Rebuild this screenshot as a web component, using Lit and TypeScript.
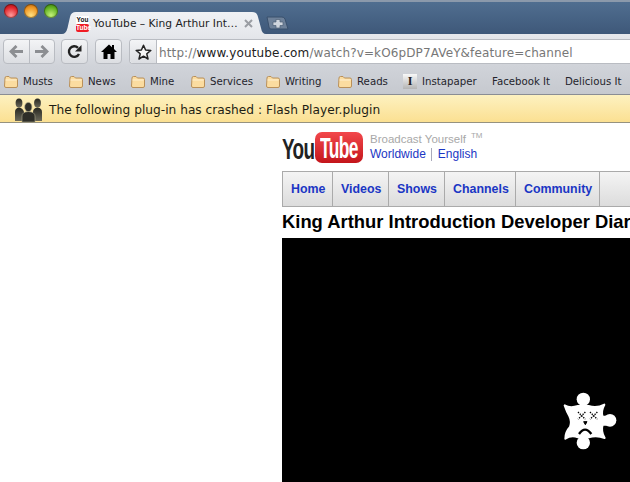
import { LitElement, html, css, svg } from "lit";
import { customElement } from "lit/decorators.js";

const folder = svg`<svg class="ficon" width="14" height="13" viewBox="0 0 14 13"><path d="M1 3 Q1 1.5 2.5 1.5 L5 1.5 L6.5 3 L12 3 Q13.5 3 13.5 4.5 L13.5 11 Q13.5 12.5 12 12.5 L2 12.5 Q.5 12.5 .5 11 Z" fill="#fbdca0" stroke="#b9905a"/><path d="M1.5 5 H12.5" stroke="#fff0d0"/></svg>`;

const marks: [string, number][] = [
  ["Musts", 65],
  ["News", 62],
  ["Mine", 60],
  ["Services", 75],
  ["Writing", 72],
  ["Reads", 65],
];

@customElement("app-root")
export class AppRoot extends LitElement {
  static styles = css`
    :host { display: block; width: 630px; height: 482px; overflow: hidden; background: #fff; font-family: "DejaVu Sans", sans-serif; color: #222; }
    .title { height: 34px; box-sizing: border-box; border-top: 2px solid #8b99ab; background: linear-gradient(#506e90, #3e5879); display: flex; align-items: flex-end; padding-left: 4px; }
    .lights { display: flex; gap: 6.5px; align-self: flex-start; margin-top: 2px; width: 54px; }
    .light { width: 14px; height: 14px; border-radius: 50%; box-shadow: inset 0 0 0 1px rgba(0,0,0,.35); }
    .red { background: radial-gradient(circle at 50% 80%, #ff9a9a, #e0242a 60%, #8c1015); }
    .amber { background: radial-gradient(circle at 50% 80%, #ffe080, #ee9420 60%, #9a5410); }
    .green { background: radial-gradient(circle at 50% 80%, #c4f27a, #60b020 60%, #2f6e10); }
    .tab { position: relative; width: 204px; height: 22px; box-sizing: border-box; margin-left: 4px; display: flex; align-items: center; }
    .tabshape { position: absolute; inset: 0; }
    .fav { position: relative; width: 13px; margin-left: 14px; margin-top: 1px; display: flex; flex-direction: column; align-items: center; font: bold 6.5px/8px "Liberation Sans", sans-serif; }
    .fav .you { color: #111; background: #fff; width: 13px; text-align: center; }
    .fav .tube { color: #fff; background: #f01c24; width: 13px; text-align: center; border-radius: 2px; }
    .tabtext { position: relative; margin-left: 4px; font-size: 10.7px; white-space: nowrap; width: 150px; color: #1c1c1c; }
    .close { position: relative; width: 9px; height: 9px; margin-left: 1px; margin-top: 1px; }
    .newtab { margin-left: 0; margin-bottom: 4px; }
    .toolbar { height: 32px; box-sizing: border-box; background: linear-gradient(#e6e8ec, #d0d3d9); display: flex; align-items: center; padding: 5px 0 2px 3px; }
    .btn { height: 25px; box-sizing: border-box; border: 1px solid #b9bcc2; border-radius: 4px; background: linear-gradient(#f3f4f6, #dcdee2); display: flex; align-items: center; justify-content: center; }
    .nav { width: 52px; margin-right: 6px; }
    .nav span { flex: 1; height: 100%; display: flex; align-items: center; justify-content: center; }
    .nav span + span { border-left: 1px solid #b9bcc2; }
    .reload { width: 27px; margin-right: 7px; }
    .home { width: 27px; margin-right: 7px; }
    .omni { flex: 1; display: flex; height: 25px; box-sizing: border-box; border: 1px solid #b9bcc2; border-right: 0; border-radius: 4px 0 0 4px; overflow: hidden; background: #fff; }
    .star { width: 26px; flex: none; background: linear-gradient(#f3f4f6, #dcdee2); border-right: 1px solid #b9bcc2; display: flex; align-items: center; justify-content: center; }
    .url { padding: 2px 0 0 2px; font-size: 12px; line-height: 23px; letter-spacing: .12px; color: #777; white-space: nowrap; }
    .url b { font-weight: normal; color: #222; }
    .marks { height: 29px; box-sizing: border-box; background: linear-gradient(#d0d3d9, #c6c9cf); border-bottom: 1px solid #8a8d94; display: flex; align-items: center; padding: 3px 0 0 4px; font-size: 10.2px; white-space: nowrap; color: #24242c; }
    .mark { display: flex; align-items: center; gap: 5px; flex: none; }
    .ficon { flex: none; }
    .insta { width: 14px; height: 15px; background: linear-gradient(#f8f8f8, #b4b4b4); font: bold 12px/15px "Liberation Serif", serif; color: #222; text-align: center; }
    .info { height: 28px; box-sizing: border-box; background: linear-gradient(#fdf1c0, #fbe092); border-bottom: 1px solid #96927f; display: flex; align-items: center; padding: 2px 0 0 15px; gap: 7px; font-size: 12.2px; color: #1e1e14; }
    .page { padding-left: 282px; font-family: "Liberation Sans", sans-serif; }
    .head { height: 48px; display: flex; align-items: flex-start; padding-top: 9px; box-sizing: border-box; }
    .logo { display: flex; width: 88px; flex: none; }
    .lyou { width: 33px; height: 31px; font: bold 30px/34px "Liberation Sans", sans-serif; color: #222; transform: scaleX(.63); transform-origin: left; letter-spacing: -1px; }
    .ltube { width: 48px; height: 31px; border-radius: 7px; background: linear-gradient(#f2484c, #c4151b); overflow: hidden; }
    .ltube span { display: block; font: bold 30px/32px "Liberation Sans", sans-serif; color: #fff; transform: scaleX(.58); transform-origin: left; margin-left: 5px; letter-spacing: -1px; }
    .tag { margin-top: 0; font-size: 12px; line-height: 15px; }
    .bc { color: #a8a8a8; display: flex; gap: 5px; font-size: 11.5px; }
    .bc sup { font-size: 8px; line-height: 8px; }
    .lang { color: #1b36c4; display: flex; align-items: center; }
    .lang i { width: 1px; height: 13px; background: #aab; margin: 0 6px 0 5px; }
    .tabs { height: 36px; box-sizing: border-box; border: 1px solid #aaa; border-right: 0; background: linear-gradient(#f4f4f4, #dcdcdc); display: flex; font-weight: bold; font-size: 12.4px; color: #1b36c4; line-height: 34px; }
    .tabs span { padding: 0 8px; border-right: 1px solid #aaa; flex: none; box-sizing: border-box; text-align: center; }
    h1 { margin: 0; height: 31px; font-size: 18.4px; line-height: 30px; font-weight: bold; color: #000; white-space: nowrap; overflow: hidden; }
    .video { position: relative; height: 244px; background: #000; }
    .puzzle { position: absolute; left: 268px; top: 144px; }
  `;

  render() {
    return html`
      <div class="title">
        <div class="lights"><div class="light red"></div><div class="light amber"></div><div class="light green"></div></div>
        <div class="tab">
          <svg class="tabshape" width="204" height="22" viewBox="0 0 204 22"><defs><linearGradient id="tg" x1="0" y1="0" x2="0" y2="1"><stop offset="0" stop-color="#f0f2f5"/><stop offset="1" stop-color="#e6e8ec"/></linearGradient></defs><path d="M0 22 Q4 22 5.5 16 L8 5 Q9 0 14 0 L190 0 Q195 0 196 5 L199 16 Q200 22 204 22 Z" fill="url(#tg)"/></svg>
          <div class="fav"><span class="you">You</span><span class="tube">Tube</span></div>
          <span class="tabtext">YouTube – King Arthur Int…</span>
          <svg class="close" viewBox="0 0 9 9"><path d="M1 1 L8 8 M8 1 L1 8" stroke="#9a9da3" stroke-width="2"/></svg>
        </div>
        <svg class="newtab" width="23" height="14" viewBox="0 0 23 14"><path d="M1 1 H16 Q18 1 19 3 L22 13 H5 Q3 13 3 11 Z" fill="#6e8199" stroke="#39506c"/><path d="M10 3.5 H14 V6 H17 V9.5 H14 V12 H10 V9.5 H7 V6 H10 Z" fill="#d0d6de" stroke="#4d6077" stroke-width=".7"/></svg>
      </div>
      <div class="toolbar">
        <div class="btn nav">
          <span><svg width="15" height="13" viewBox="0 0 16 14"><path d="M8 1 L2 7 L8 13 M2.5 7 H15" fill="none" stroke="#8c8e92" stroke-width="3"/></svg></span>
          <span><svg width="15" height="13" viewBox="0 0 16 14"><path d="M8 1 L14 7 L8 13 M13.5 7 H1" fill="none" stroke="#8c8e92" stroke-width="3"/></svg></span>
        </div>
        <div class="btn reload"><svg width="15" height="15" viewBox="0 0 15 15"><path d="M12 10 A5.3 5.3 0 1 1 11 3.8" fill="none" stroke="#222" stroke-width="2.4"/><path d="M14.5 1 V7.5 H8 Z" fill="#222"/></svg></div>
        <div class="btn home"><svg width="16" height="15" viewBox="0 0 16 15"><path d="M8 0.5 L11 3.2 V1 H13 V5 L16 8 H13.5 V15 H9.5 V10 H6.5 V15 H2.5 V8 H0 Z" fill="#000"/></svg></div>
        <div class="omni">
          <div class="star"><svg width="17" height="16" viewBox="0 0 17 16"><path d="M8.5 1.2 L10.6 6 L15.8 6.4 L11.8 9.8 L13 15 L8.5 12.2 L4 15 L5.2 9.8 L1.2 6.4 L6.4 6 Z" fill="#f6f6f6" stroke="#222" stroke-width="1.5" stroke-linejoin="round"/></svg></div>
          <div class="url">http://<b>www.youtube.com</b>/watch?v=kO6pDP7AVeY&amp;feature=channel</div>
        </div>
      </div>
      <div class="marks">
        ${marks.map(([t, w]) => html`<div class="mark" style="width:${w}px">${folder}<span>${t}</span></div>`)}
        <div class="mark" style="width:89px"><div class="insta">I</div><span>Instapaper</span></div>
        <div class="mark" style="width:73px"><span>Facebook It</span></div>
        <div class="mark"><span>Delicious It</span></div>
      </div>
      <div class="info">
        <svg width="27" height="24" viewBox="0 0 27 24"><defs><linearGradient id="pg" x1="0" y1="0" x2="0" y2="1"><stop offset="0" stop-color="#26261f"/><stop offset="1" stop-color="#6a685a"/></linearGradient></defs>
          <g fill="url(#pg)"><ellipse cx="4" cy="5" rx="3.4" ry="4.5"/><ellipse cx="22.5" cy="5" rx="3.4" ry="4.5"/><path d="M0 23 V14 Q0 10 4 9.5 Q8 10 9 14 V23 Z"/><path d="M18 23 V14 Q18 10 22.5 9.5 Q27 10 27 14 V23 Z"/></g>
          <g fill="#2e2e28" stroke="#a8a488" stroke-width=".6"><ellipse cx="13.3" cy="9" rx="3.6" ry="4.6"/><path d="M7 24 V18 Q7 14 13.3 13.5 Q20 14 20 18 V24 Z"/></g></svg>
        <span>The following plug-in has crashed : Flash Player.plugin</span>
      </div>
      <div class="page">
        <div class="head">
          <div class="logo"><div class="lyou">You</div><div class="ltube"><span>Tube</span></div></div>
          <div class="tag">
            <div class="bc">Broadcast Yourself <sup>TM</sup></div>
            <div class="lang">Worldwide<i></i>English</div>
          </div>
        </div>
        <div class="tabs"><span style="width:50px">Home</span><span style="width:56px">Videos</span><span style="width:56px">Shows</span><span style="width:71px">Channels</span><span style="width:84px">Community</span></div>
        <h1>King Arthur Introduction Developer Diaries</h1>
        <div class="video">
          <svg class="puzzle" width="80" height="80" viewBox="0 0 240 240">
            <g fill="#fff"><circle cx="100" cy="52" r="20"/><circle cx="180" cy="115" r="19"/><circle cx="100" cy="182" r="20"/>
            <path d="M44 70 Q60 80 84 72 L116 72 Q140 80 163 68 Q152 88 158 104 L172 104 L172 128 L158 128 Q152 148 164 168 Q140 158 116 166 L84 166 Q64 158 46 170 Q46 150 60 135 Q66 118 58 102 Q50 88 44 70 Z" stroke="#fff" stroke-width="6" stroke-linejoin="round"/></g>
            <g stroke="#000" stroke-width="4" fill="none"><path d="M84 90 L106 112 M106 90 L84 112 M120 90 L142 112 M142 90 L120 112" stroke-dasharray="4 3.5"/></g>
            <path d="M101 119 L111 119 L106 128 Z" fill="#000" stroke="#000" stroke-width="3"/>
            <path d="M87 156 Q105 130 124 156" fill="none" stroke="#000" stroke-width="7"/>
          </svg>
        </div>
      </div>
    `;
  }
}
